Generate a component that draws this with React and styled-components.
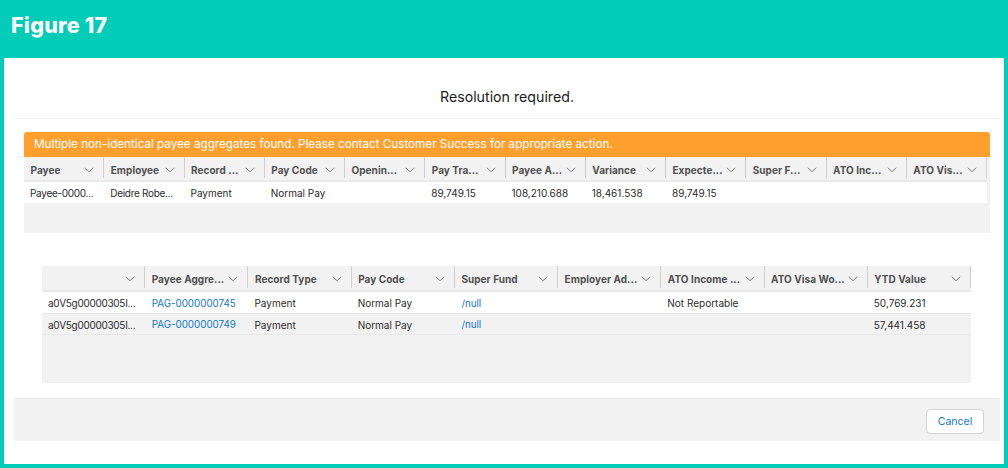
import React from "react";
import styled, { createGlobalStyle } from "styled-components";

const Global = createGlobalStyle`
  html, body { margin: 0; padding: 0; }
  body { width: 1008px; height: 468px; overflow: hidden; background: #00ccb8; font-family: Inter, "Liberation Sans", sans-serif; }
`;
const Page = styled.div`
  width: 1008px; height: 468px; display: flex; flex-direction: column; background: #00ccb8;
`;
const FigureBar = styled.div`
  height: 58px; box-sizing: border-box; padding: 11px 0 0 11px; flex: none;
`;
const FigureTitle = styled.h1`
  margin: 0; font-size: 21.5px; line-height: 28px; font-weight: 800; color: #fff; font-family: Inter, sans-serif; letter-spacing: 0.25px;
`;
const Panel = styled.div`
  margin: 0 4px; height: 406px; background: #fff; flex: none; box-sizing: border-box; padding: 0 4px 0 10px; display: flex; flex-direction: column;
`;
const ModalHeader = styled.div`
  height: 61px; box-sizing: border-box; border-bottom: 1.5px solid #efefef; display: flex; align-items: center; justify-content: center; padding: 17px 0 0 0; flex: none;
`;
const ModalTitle = styled.h2`
  margin: 0; font-size: 14.2px; font-weight: 400; color: #1c1c1c; line-height: 20px;
`;
const ModalBody = styled.div`
  height: 279px; flex: none; box-sizing: border-box; padding: 13px 10px 0 10px;
`;
const Banner = styled.div`
  height: 25px; box-sizing: border-box; padding: 0 10px; border-radius: 3px 3px 0 0; background: #ff9f2e; color: #fff; font-size: 11.68px; line-height: 25px; white-space: nowrap;
`;
const Grid = styled.div`
  background: #f2f2f2; height: ${p => p.$height}px; margin: ${p => p.$margin};
`;
const Row = styled.div`
  display: grid; grid-template-columns: repeat(${p => p.$cols}, 1fr); width: ${p => p.$width}px;
  height: ${p => p.$height}px; box-sizing: border-box; background: ${p => p.$bg || "#fff"};
  border-bottom: ${p => p.$line ? "1.5px solid #e7e7e7" : "none"};
`;
const HeaderCell = styled.div`
  display: flex; align-items: center; min-width: 0; box-sizing: border-box; padding: 2px 10px 0 6.5px; position: relative;
  background: #f2f2f2; border-bottom: 2px solid #e9e9e9;
  &::after { content: ""; position: absolute; right: 0; top: 0; bottom: 2px; width: 1px; background: #cfcfcf; }
`;
const HeaderText = styled.span`
  flex: 1; min-width: 0; white-space: nowrap; font-size: 10px; font-weight: 700; color: #505050; letter-spacing: 0.05px;
`;
const Chevron = styled.svg`
  width: 10px; height: 6px; flex: none; margin-left: 3px; fill: none; stroke: #777; stroke-width: 1;
`;
const Cell = styled.div`
  display: flex; align-items: center; min-width: 0; box-sizing: border-box; padding: 1px 6px 0; font-size: 10px; color: #2b2b2b; white-space: nowrap; overflow: hidden;
  letter-spacing: ${p => p.$tight ? "-0.3px" : "0"};
`;
const CellLink = styled.a`
  color: #0f76d2; text-decoration: none; font-size: 9.8px; margin-left: 0.5px;
`;
const Footer = styled.div`
  height: 43px; flex: none; box-sizing: border-box; background: #f2f2f2; border-top: 1.5px solid #e8e8e8; display: flex; align-items: center; justify-content: flex-end; padding: 3px 16px 0 0;
`;
const CancelButton = styled.button`
  width: 58px; height: 25px; border: 1px solid #d4d4d4; border-radius: 4px; background: #fff; color: #0f76d2; font: 400 10.5px Inter, sans-serif; padding: 0;
`;

const Icon = () => (
  <Chevron viewBox="0 0 10 6"><path d="M1 .8l4 4 4-4" /></Chevron>
);

const top = ["Payee", "Employee", "Record ...", "Pay Code", "Openin...", "Pay Tra...", "Payee A...", "Variance", "Expecte...", "Super F...", "ATO Inc...", "ATO Vis..."];
const topRow = ["Payee-0000...", "Deidre Robe...", "Payment", "Normal Pay", "", "89,749.15", "108,210.688", "18,461.538", "89,749.15", "", "", ""];
const bottom = ["", "Payee Aggre...", "Record Type", "Pay Code", "Super Fund", "Employer Ad...", "ATO Income ...", "ATO Visa Wo...", "YTD Value"];
const rows = [
  ["a0V5g00000305I...", "PAG-0000000745", "Payment", "Normal Pay", "/null", "", "Not Reportable", "", "50,769.231"],
  ["a0V5g00000305I...", "PAG-0000000749", "Payment", "Normal Pay", "/null", "", "", "", "57,441.458"],
];

const Header = ({ labels, width, height }) => (
  <Row $cols={labels.length} $width={width} $height={height} $bg="#f2f2f2">
    {labels.map((l, i) => (
      <HeaderCell key={i}><HeaderText>{l}</HeaderText><Icon /></HeaderCell>
    ))}
  </Row>
);

const isLink = v => v.startsWith("PAG") || v === "/null";
const Data = ({ values, width, height, bg, line }) => (
  <Row $cols={values.length} $width={width} $height={height} $bg={bg} $line={line}>
    {values.map((v, i) => (
      <Cell key={i} $tight={v.endsWith("...")}>{isLink(v) ? <CellLink>{v}</CellLink> : v}</Cell>
    ))}
  </Row>
);

export default function App() {
  return (
    <Page>
      <Global />
      <FigureBar><FigureTitle>Figure 17</FigureTitle></FigureBar>
      <Panel>
        <ModalHeader><ModalTitle>Resolution required.</ModalTitle></ModalHeader>
        <ModalBody>
          <Banner>Multiple non-identical payee aggregates found. Please contact Customer Success for appropriate action.</Banner>
          <Grid $height={76}>
            <Header labels={top} width={963} height={25} />
            <Data values={topRow} width={963} height={21} />
          </Grid>
          <Grid $height={117} $margin="33px 19px 0 18px">
            <Header labels={bottom} width={929} height={26} />
            <Data values={rows[0]} width={929} height={22} line />
            <Data values={rows[1]} width={929} height={21} bg="#f2f2f2" line />
          </Grid>
        </ModalBody>
        <Footer><CancelButton>Cancel</CancelButton></Footer>
      </Panel>
    </Page>
  );
}
